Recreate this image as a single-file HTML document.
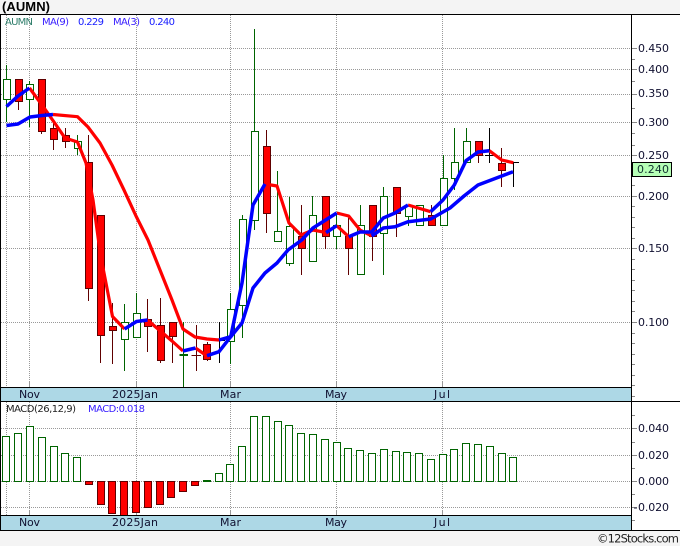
<!DOCTYPE html>
<html><head><meta charset="utf-8"><style>
html,body{margin:0;padding:0;width:680px;height:546px;overflow:hidden;background:#f4f4f4}
svg{display:block}
text{font-family:"DejaVu Sans",sans-serif}
</style></head><body>
<svg width="680" height="546" viewBox="0 0 680 546" xmlns="http://www.w3.org/2000/svg">
<rect width="680" height="546" fill="#f4f4f4"/>
<rect x="0" y="14" width="680" height="517" fill="#fff"/>
<text x="2" y="11" font-size="13" font-weight="700" style="font-family:'Liberation Sans',sans-serif" textLength="48">(AUMN)</text>

<!-- grid -->
<g stroke="#999" stroke-width="1" stroke-dasharray="1 1" fill="none" shape-rendering="crispEdges">
<path d="M1 48.5H632M1 69.5H632M1 94.5H632M1 122.5H632M1 155.5H632M1 196.5H632M1 248.5H632M1 322.5H632"/>
<path d="M6.5 15V387M29.5 15V387M136.5 15V387M230.5 15V387M336.5 15V387M442.5 15V387"/>
<path d="M6.5 402V515M29.5 402V515M136.5 402V515M230.5 402V515M336.5 402V515M442.5 402V515"/>
<path d="M1 428.5H632M1 455.5H632M1 481.5H632M1 507.5H632"/>
</g>
<path d="M29.5 381V387M136.5 381V387M230.5 381V387M336.5 381V387M442.5 381V387M29.5 510V515M136.5 510V515M230.5 510V515M336.5 510V515M442.5 510V515" stroke="#999" shape-rendering="crispEdges"/>

<!-- wicks -->
<g fill="none" stroke-width="1" shape-rendering="crispEdges">
<path stroke="#006400" d="M6.5 65V122M29.5 81V127M77.5 135V155M124.5 304V371M136.5 293V338M183.5 322V387M230.5 293V364M242.5 215V338M254.5 29V230M277.5 171V232M289.5 197V266M312.5 196V261M336.5 213V249M360.5 205V275M383.5 187V275M408.5 205V226M443.5 155V225M454.5 128V190M466.5 128V162"/>
<path stroke="#600000" d="M18.5 79V110M41.5 79V134M53.5 122V150M65.5 128V148M88.5 135V301M100.5 215V363M112.5 303V364M147.5 299V352M160.5 298V363M172.5 322V363M196.5 325V371M207.5 342V361M266.5 130V233M301.5 205V275M325.5 196V249M348.5 218V275M372.5 205V261M396.5 187V237M431.5 205V225M478.5 141V163M501.5 148V187"/>
<path stroke="#000" d="M219.5 322V363M489.5 128V163M513.5 162V187M485 155.5H495M507 162.5H519M214 340.5H225"/>
<path stroke="#006400" stroke-width="2" d="M179.5 355H188"/>
<path stroke="#600000" d="M191.5 355.5H201"/>
</g>

<!-- hollow bodies -->
<g fill="#fff" stroke="#006400" stroke-width="1" shape-rendering="crispEdges">
<rect x="3.5" y="79.5" width="7" height="20"/>
<rect x="26.5" y="84.5" width="7" height="15"/>
<rect x="74.5" y="141.5" width="7" height="7"/>
<rect x="121.5" y="322.5" width="7" height="17"/>
<rect x="133.5" y="313.5" width="7" height="24"/>
<rect x="227.5" y="309.5" width="7" height="32"/>
<rect x="239.5" y="219.5" width="7" height="86"/>
<rect x="251.5" y="131.5" width="7" height="89"/>
<rect x="274.5" y="231.5" width="7" height="10"/>
<rect x="286.5" y="226.5" width="7" height="37"/>
<rect x="309.5" y="215.5" width="7" height="46"/>
<rect x="333.5" y="225.5" width="7" height="11"/>
<rect x="357.5" y="225.5" width="7" height="49"/>
<rect x="380.5" y="196.5" width="7" height="37"/>
<rect x="405.5" y="205.5" width="7" height="11"/>
<rect x="416.5" y="205.5" width="7" height="20"/>
<rect x="440.5" y="178.5" width="7" height="47"/>
<rect x="451.5" y="162.5" width="7" height="16"/>
<rect x="463.5" y="141.5" width="7" height="21"/>
</g>
<!-- red bodies -->
<g fill="#f00" stroke="#600000" stroke-width="1" shape-rendering="crispEdges">
<rect x="15.5" y="79.5" width="7" height="22"/>
<rect x="38.5" y="79.5" width="7" height="52"/>
<rect x="50.5" y="128.5" width="7" height="11"/>
<rect x="62.5" y="135.5" width="7" height="6"/>
<rect x="85.5" y="162.5" width="7" height="126"/>
<rect x="97.5" y="215.5" width="7" height="120"/>
<rect x="109.5" y="326.5" width="7" height="4"/>
<rect x="144.5" y="319.5" width="7" height="7"/>
<rect x="157.5" y="325.5" width="7" height="35"/>
<rect x="169.5" y="322.5" width="7" height="14"/>
<rect x="203.5" y="344.5" width="7" height="15"/>
<rect x="263.5" y="146.5" width="7" height="67"/>
<rect x="298.5" y="236.5" width="7" height="12"/>
<rect x="322.5" y="196.5" width="7" height="40"/>
<rect x="345.5" y="236.5" width="7" height="12"/>
<rect x="369.5" y="205.5" width="7" height="31"/>
<rect x="393.5" y="187.5" width="7" height="26"/>
<rect x="428.5" y="215.5" width="7" height="10"/>
<rect x="475.5" y="141.5" width="7" height="14"/>
<rect x="498.5" y="163.5" width="7" height="7"/>
</g>

<!-- MA lines -->
<g fill="none" stroke-linejoin="round">
<g stroke="#f00" stroke-width="3.2">
<polyline points="53,114.5 77.5,116.7 88,127 100,143 112,165 124,190 136,216 148,240 160,270 172,300 183,329 195,337 207,339 219,340"/>
<polyline points="29.5,88 42,105 54,122 65,138 77.5,142 86,163 93,200 100.5,255 112.5,316.5 124.5,329"/>
<polyline points="147.5,320 172,341 183,351"/>
<polyline points="195.5,348 207,356"/>
<polyline points="265,184 277,186 289,223 301,235 313,230 326,232.6"/>
<polyline points="336.7,225.7 348.7,236.7"/>
<polyline points="336.7,213 348.7,216 360,230 371.7,236"/>
<polyline points="408,205 430.7,211.7"/>
<polyline points="489.3,150.7 501.7,160 513.3,162.7"/>
</g>
<g stroke="#0000ff" stroke-width="3.5">
<polyline points="6.5,125.5 18,124 30,117 42,115.5 53,114.5"/>
<polyline points="6.5,106.5 18,96 29.5,88"/>
<polyline points="124.5,329 136.5,321.5 147.5,320"/>
<polyline points="183,351 195.5,348"/>
<polyline points="207,355.7 219,351.7 230.7,336.7 242,283 253,205 265,184"/>
<polyline points="219,340 230.7,336.7 242,323 253,288 265,273 277,263 288,250 301.7,240 313,228 336.7,213"/>
<polyline points="326,232.6 336.7,225.7"/>
<polyline points="348.7,236.7 360,232 371.7,232 383.3,218 395,213 408,205"/>
<polyline points="371.7,236 383.3,228 395,226.7 408,221.7 430.7,219 450,208 464,196 478,185 513,171.7"/>
<polyline points="430.7,211.7 443,200 454.3,185 466,160.7 478,152 489.3,150.7"/>
</g>
</g>

<!-- MACD hollow bars -->
<g fill="#fff" stroke="#006400" stroke-width="1" shape-rendering="crispEdges">
<rect x="2.5" y="436.5" width="7" height="45"/>
<rect x="14.5" y="433.5" width="7" height="48"/>
<rect x="26.5" y="426.5" width="7" height="55"/>
<rect x="38.5" y="437.5" width="7" height="44"/>
<rect x="50.5" y="446.5" width="7" height="35"/>
<rect x="61.5" y="453.5" width="7" height="28"/>
<rect x="73.5" y="457.5" width="7" height="24"/>
<rect x="215.5" y="473.5" width="7" height="8"/>
<rect x="226.5" y="464.5" width="7" height="17"/>
<rect x="238.5" y="446.5" width="7" height="35"/>
<rect x="250.5" y="416.5" width="7" height="65"/>
<rect x="262.5" y="416.5" width="7" height="65"/>
<rect x="274.5" y="421.5" width="7" height="60"/>
<rect x="285.5" y="425.5" width="7" height="56"/>
<rect x="297.5" y="433.5" width="7" height="48"/>
<rect x="309.5" y="434.5" width="7" height="47"/>
<rect x="321.5" y="439.5" width="7" height="42"/>
<rect x="333.5" y="442.5" width="7" height="39"/>
<rect x="344.5" y="448.5" width="7" height="33"/>
<rect x="356.5" y="450.5" width="7" height="31"/>
<rect x="368.5" y="453.5" width="7" height="28"/>
<rect x="380.5" y="449.5" width="7" height="32"/>
<rect x="392.5" y="451.5" width="7" height="30"/>
<rect x="403.5" y="452.5" width="7" height="29"/>
<rect x="415.5" y="453.5" width="7" height="28"/>
<rect x="427.5" y="459.5" width="7" height="22"/>
<rect x="439.5" y="454.5" width="7" height="27"/>
<rect x="450.5" y="449.5" width="7" height="32"/>
<rect x="462.5" y="443.5" width="7" height="38"/>
<rect x="474.5" y="444.5" width="7" height="37"/>
<rect x="486.5" y="446.5" width="7" height="35"/>
<rect x="498.5" y="453.5" width="7" height="28"/>
<rect x="509.5" y="457.5" width="7" height="24"/>
</g>
<g fill="#f00" stroke="#600000" stroke-width="1" shape-rendering="crispEdges">
<rect x="85.5" y="481.5" width="7" height="3"/>
<rect x="97.5" y="481.5" width="7" height="23"/>
<rect x="108.5" y="481.5" width="7" height="32"/>
<rect x="120.5" y="481.5" width="7" height="35"/>
<rect x="132.5" y="481.5" width="7" height="31"/>
<rect x="144.5" y="481.5" width="7" height="26"/>
<rect x="156.5" y="481.5" width="7" height="23"/>
<rect x="167.5" y="481.5" width="7" height="16"/>
<rect x="179.5" y="481.5" width="7" height="10"/>
<rect x="191.5" y="481.5" width="7" height="4"/>
</g>
<rect x="203" y="480" width="8" height="2" fill="#006400"/>

<!-- date bars -->
<rect x="0" y="387" width="632" height="14" fill="#add8e6"/>
<rect x="0" y="516" width="632" height="14" fill="#add8e6"/>
<g fill="#000" shape-rendering="crispEdges">
<rect x="0" y="14" width="680" height="1"/>
<rect x="0" y="14" width="1" height="517"/>
<rect x="0" y="387" width="632" height="1"/>
<rect x="0" y="401" width="680" height="1"/>
<rect x="0" y="515" width="632" height="1"/>
<rect x="0" y="530" width="680" height="1"/>
<rect x="631" y="14" width="1" height="517"/>
</g>

<!-- axis ticks -->
<path shape-rendering="crispEdges" stroke="#888" d="M632 48.5H637M632 69.5H637M632 94.5H637M632 122.5H637M632 155.5H637M632 196.5H637M632 248.5H637M632 322.5H637M632 428.5H637M632 455.5H637M632 481.5H637M632 507.5H637M632 59.5H635M632 81.5H635M632 108.5H635M632 133.5H635M632 145.5H635M632 185.5H635M632 206.5H635M632 217.5H635M632 227.5H635M632 238.5H635M632 259.5H635M632 269.5H635M632 280.5H635M632 290.5H635M632 301.5H635M632 311.5H635M632 333.5H635M632 343.5H635M632 354.5H635M632 364.5H635M632 375.5H635M632 385.5H635M632 396.5H635M632 415.5H635M632 442.5H635M632 468.5H635M632 494.5H635M632 520.5H635"/>

<!-- price tag -->
<rect x="632.5" y="162.5" width="39" height="14" fill="#b6ffb6" stroke="#000" shape-rendering="crispEdges"/>

<!-- labels -->
<g font-size="11" fill="#101030">
<text x="638" y="52" textLength="31">0.450</text>
<text x="638" y="73" textLength="31">0.400</text>
<text x="638" y="97" textLength="31">0.350</text>
<text x="638" y="126" textLength="31">0.300</text>
<text x="638" y="159" textLength="31">0.250</text>
<text x="638" y="200" textLength="31">0.200</text>
<text x="638" y="252" textLength="31">0.150</text>
<text x="638" y="326" textLength="31">0.100</text>
<text x="637" y="173" textLength="32" fill="#103030">0.240</text>
<text x="638" y="432" textLength="31">0.040</text>
<text x="638" y="459" textLength="31">0.020</text>
<text x="638" y="485" textLength="31">0.000</text>
<text x="638" y="511" textLength="31">0.020</text>
<text x="633.5" y="511">-</text>
<text x="19" y="398" textLength="21">Nov</text>
<text x="112" y="398" textLength="46">2025Jan</text>
<text x="220" y="398" textLength="21">Mar</text>
<text x="325" y="398" textLength="22">May</text>
<text x="434" y="398" textLength="16">Jul</text>
<text x="19" y="526" textLength="21">Nov</text>
<text x="112" y="526" textLength="46">2025Jan</text>
<text x="220" y="526" textLength="21">Mar</text>
<text x="325" y="526" textLength="22">May</text>
<text x="434" y="526" textLength="16">Jul</text>
</g>
<g font-size="10">
<text x="5" y="25" textLength="28" fill="#2e7d6a">AUMN</text>
<text x="42" y="25" textLength="27" fill="#3a20ff">MA(9)</text>
<text x="78" y="25" textLength="26" fill="#1a20ff">0.229</text>
<text x="113" y="25" textLength="27" fill="#3a20ff">MA(3)</text>
<text x="149" y="25" textLength="26" fill="#1a20ff">0.240</text>
<text x="6" y="412" textLength="70" fill="#222">MACD(26,12,9)</text>
<text x="88" y="412" textLength="57" fill="#3a20ff">MACD:0.018</text>
</g>
<text x="597" y="542.5" font-size="11.5" fill="#222" textLength="82">©12Stocks.com</text>
</svg>
</body></html>
